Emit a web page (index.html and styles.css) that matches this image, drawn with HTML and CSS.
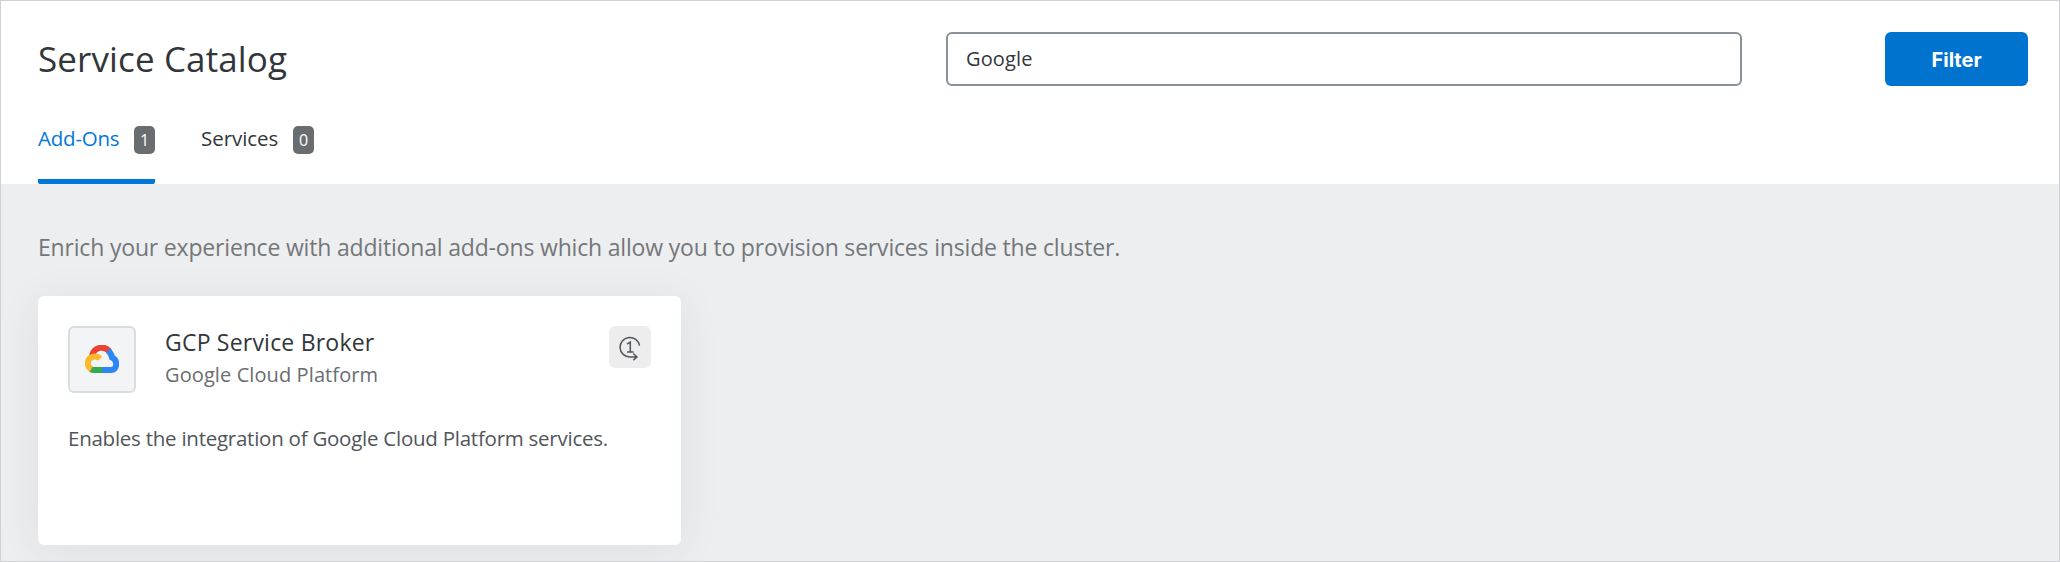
FILE: index.html
```html
<!DOCTYPE html>
<html lang="en">
<head>
<meta charset="utf-8">
<title>Service Catalog</title>
<link rel="stylesheet" href="styles.css">
</head>
<body>
<div class="page">
  <header class="header">
    <div class="toolbar">
      <h1 class="title">Service Catalog</h1>
      <input class="search" type="text" value="Google" aria-label="Search">
      <button class="filter" type="button">Filter</button>
    </div>
    <nav class="tabs">
      <a class="tab tab-active"><span class="tab-label tab-label-addons">Add-Ons</span><span class="count">1</span></a>
      <a class="tab"><span class="tab-label tab-label-services">Services</span><span class="count">0</span></a>
    </nav>
  </header>
  <main class="content">
    <p class="intro">Enrich your experience with additional add-ons which allow you to provision services inside the cluster.</p>
    <article class="card">
      <div class="card-head">
        <div class="logo">
          <svg width="34" height="28" viewBox="0 0 34 28" fill="none" stroke-width="6">
            <path d="M7 10.5C9.5 1.500 19.500 .5 24.400 6.300" stroke="#ea4335"/>
            <path d="M23 5.500C26.300 8.500 26.700 10 27 12.500C33 15 32.500 25 26 25H17" stroke="#2d87f3"/>
            <path d="M17 25H9C7.500 25 6.500 24.600 5.500 23.800" stroke="#34a853"/>
            <path d="M6.200 24.300C.5 20.500 2.500 11.500 10 11.500C12 11.500 13.600 12.300 15 13.800" stroke="#fdb92c"/>
          </svg>
        </div>
        <div class="names">
          <h2 class="name">GCP Service Broker</h2>
          <p class="vendor">Google Cloud Platform</p>
        </div>
        <div class="once">
          <svg width="42" height="42" viewBox="0 0 42 42" fill="none" stroke="#51555a" stroke-width="1.500">
            <path d="M30.500 19.700A9.800 9.800 0 1 0 21 31H28M24.300 27.500L28 30.900L24.300 34.300"/>
            <path d="M18 18.200L21.300 16.200V26M18 26H24.600"/>
          </svg>
        </div>
      </div>
      <p class="description">Enables the integration of Google Cloud Platform services.</p>
    </article>
  </main>
</div>
</body>
</html>
```
FILE: styles.css
```css
* {
  box-sizing: border-box;
}

body,
h1,
h2,
p {
  margin: 0;
  font-weight: 400;
}

body {
  font-family: "Open Sans", "Noto Sans", sans-serif;
  color: #32363a;
}

.page {
  height: 562px;
  border: 1px solid #d0d2d8;
  background: #edeef0;
  overflow: hidden;
  display: flex;
  flex-direction: column;
}

.header {
  height: 183px;
  background: #fff;
  padding: 31px 31px 0 37px;
}

.toolbar {
  display: grid;
  grid-template-columns: 908px 1fr 143px;
  grid-template-rows: 54px;
}

.title {
  font-size: 35px;
  line-height: 54px;
  letter-spacing: .12px;
}

.search {
  width: 796px;
  height: 54px;
  border: 2px solid #89919a;
  border-radius: 6px;
  background: #fff;
  padding: 0 18px 1px;
  font: 20px/49px "Open Sans", sans-serif;
  letter-spacing: .15px;
  color: #32363a;
}

.filter {
  height: 54px;
  border: 0;
  border-radius: 6px;
  background: #0073ce;
  color: #fff;
  font: 700 20px/52px Inter, sans-serif;
  padding: 2px 0 0;
}

.tabs {
  display: flex;
  gap: 46px;
  margin-top: 40px;
}

.tab {
  display: flex;
  justify-content: space-between;
  height: 58px;
  font-size: 20.500px;
  line-height: 25px;
  letter-spacing: -.22px;
}

.tab-active {
  color: #0078d8;
  border-bottom: 5px solid #0078d8;
  border-radius: 2px;
}

.tab-label-addons {
  width: 96px;
}

.tab-label-services {
  width: 92px;
  letter-spacing: -.05px;
}

.count {
  width: 21px;
  height: 28px;
  border-radius: 5px;
  background: #6a6d70;
  color: #fff;
  font-size: 16px;
  line-height: 29px;
  letter-spacing: 0;
  text-align: center;
}

.content {
  padding: 44px 37px;
}

.intro {
  font-size: 23px;
  line-height: 38px;
  letter-spacing: -.18px;
  color: #74777a;
  white-space: nowrap;
}

.card {
  width: 643px;
  height: 249px;
  margin-top: 30px;
  padding: 30px;
  border-radius: 6px;
  background: #fff;
  box-shadow: 0 5px 40px rgba(50, 54, 58, .08);
}

.card-head {
  display: flex;
}

.logo {
  display: flex;
  align-items: center;
  justify-content: center;
  width: 68px;
  height: 67px;
  border: 2px solid #d9dce0;
  border-radius: 6px;
  background: #f3f4f5;
  padding-bottom: 2px;
}

.names {
  flex: 1;
  padding-left: 29px;
}

.name {
  font-size: 23px;
  line-height: 33px;
  letter-spacing: .21px;
}

.vendor {
  font-size: 20px;
  line-height: 31px;
  letter-spacing: .1px;
  color: #6a6d70;
}

.once {
  width: 42px;
  height: 42px;
  border-radius: 6px;
  background: #ededed;
}

.once svg {
  display: block;
}

.description {
  margin-top: 30px;
  font-size: 20.500px;
  line-height: 30px;
  letter-spacing: -.25px;
  color: #51555a;
  white-space: nowrap;
}
```
